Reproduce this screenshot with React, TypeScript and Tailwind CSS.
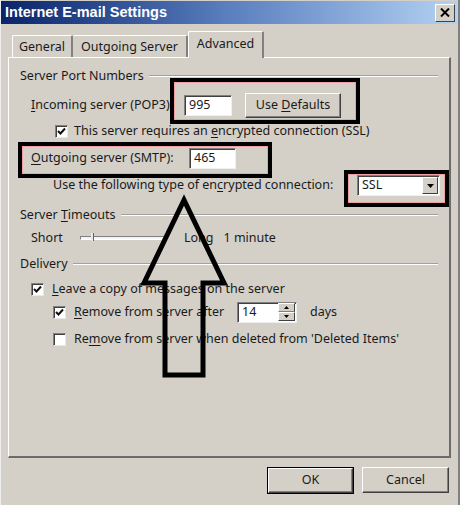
import React from "react";

const Check = ({ checked }: { checked: boolean }) => (
  <div className="w-[13px] h-[13px] bg-white border border-t-[#808080] border-l-[#808080] border-r-[#e8e8e8] border-b-[#e8e8e8] shadow-[inset_1px_1px_0_#404040] flex items-center justify-center shrink-0">
    {checked && (
      <svg width="9" height="9" viewBox="0 0 9 9">
        <path d="M1 4 L3.5 6.5 L8 1.5" stroke="#111" strokeWidth="2" fill="none" />
      </svg>
    )}
  </div>
);

const GroupHeader = ({ children, mt }: { children: React.ReactNode; mt: string }) => (
  <div className={`flex items-center h-[20px] pl-[11px] pr-[11px] ${mt}`}>
    <span className="whitespace-nowrap">{children}</span>
    <div className="flex-1 ml-[5px] h-[2px] border-t border-t-[#a0a0a0] border-b border-b-white" />
  </div>
);

const U = ({ children }: { children: React.ReactNode }) => <span className="underline underline-offset-2">{children}</span>;

const Input = ({ value, w }: { value: string; w: string }) => (
  <div className={`${w} h-[21px] bg-white border border-t-[#808080] border-l-[#808080] border-r-[#f0f0f0] border-b-[#f0f0f0] shadow-[inset_1px_1px_0_#404040] flex items-center pl-[4px] shrink-0`}>
    {value}
  </div>
);

export default function App() {
  return (
    <div
      className="w-[460px] h-[505px] bg-[#d4d0c8] relative overflow-hidden text-[12.5px] text-[#1a1a1a] border-l border-l-[#eeeeee] border-r-2 border-r-[#808080]"
      style={{ fontFamily: '"Noto Sans", "Open Sans", sans-serif' }}
    >
      {/* Title bar */}
      <div className="mt-[1px] h-[23px] flex items-center justify-between pl-[4px] pr-[3px] bg-gradient-to-r from-[#0a246a] via-[#5b7fbf] to-[#b4d2f2]">
        <span className="text-white font-bold text-[14.5px]" style={{ fontFamily: '"Liberation Sans", Arial, sans-serif' }}>
          Internet E-mail Settings
        </span>
        <div className="w-[20px] h-[18px] bg-[#d4d0c8] border border-t-white border-l-white border-r-[#404040] border-b-[#404040] flex items-center justify-center">
          <svg width="10" height="9" viewBox="0 0 10 9">
            <path d="M1 0.5 L9 8.5 M9 0.5 L1 8.5" stroke="#000" strokeWidth="2" />
          </svg>
        </div>
      </div>

      {/* Tabs */}
      <div className="mt-[8px] ml-[11px] h-[25px] flex items-end relative z-10">
        <div className="h-[22px] w-[61px] flex items-center justify-center pt-[2px] border-t border-l border-t-white border-l-white border-r-2 border-r-[#808080] rounded-t-[2px]">
          General
        </div>
        <div className="h-[22px] w-[115px] flex items-center justify-center pt-[2px] border-t border-t-white border-r-2 border-r-[#808080] rounded-t-[2px]">
          Outgoing Server
        </div>
        <div className="h-[27px] -mb-[1px] w-[76px] flex items-start pt-[3px] justify-center border-t border-l border-t-white border-l-white border-r-2 border-r-[#808080] bg-[#d4d0c8] rounded-t-[2px]">
          Advanced
        </div>
      </div>

      {/* Panel */}
      <div className="ml-[7px] w-[443px] h-[401px] border-t border-l border-t-white border-l-white border-r-2 border-b-2 border-r-[#6b6b6b] border-b-[#6b6b6b] flex flex-col">
        <GroupHeader mt="mt-[8px]">Server Port Numbers</GroupHeader>

        <div className="mt-[6px] h-[26px] flex items-center pl-[22px]">
          <span className="w-[153px] whitespace-nowrap"><U>I</U>ncoming server (POP3):</span>
          <Input value="995" w="w-[48px]" />
          <div className="ml-[13px] w-[96px] h-[25px] border border-t-white border-l-white border-r-[#404040] border-b-[#404040] shadow-[inset_-1px_-1px_0_#808080] flex items-center justify-center">
            <span>Use <U>D</U>efaults</span>
          </div>
        </div>

        <div className="mt-[4px] h-[18px] flex items-center pl-[46px]">
          <Check checked />
          <span className="ml-[6px] whitespace-nowrap">This server requires an <U>e</U>ncrypted connection (SSL)</span>
        </div>

        <div className="mt-[8px] h-[21px] flex items-center pl-[22px]">
          <span className="w-[158px] whitespace-nowrap"><U>O</U>utgoing server (SMTP):</span>
          <Input value="465" w="w-[47px]" />
        </div>

        <div className="mt-[6px] h-[21px] flex items-center pl-[44px]">
          <span className="w-[304px] whitespace-nowrap overflow-hidden">Use the following type of en<U>c</U>rypted connection:</span>
          <div className="w-[83px] h-[21px] bg-white border border-t-[#808080] border-l-[#808080] border-r-[#f0f0f0] border-b-[#f0f0f0] shadow-[inset_1px_1px_0_#404040] flex items-center justify-between pl-[4px] pr-[1px]">
            <span>SSL</span>
            <div className="w-[16px] h-[17px] bg-[#d4d0c8] border border-t-white border-l-white border-r-[#404040] border-b-[#404040] flex items-center justify-center">
              <svg width="7" height="4" viewBox="0 0 7 4"><path d="M0 0 H7 L3.5 4 Z" fill="#000" /></svg>
            </div>
          </div>
        </div>

        <GroupHeader mt="mt-[9px]">Server <U>T</U>imeouts</GroupHeader>

        <div className="mt-[3px] h-[20px] flex items-center pl-[22px]">
          <span className="w-[49px]">Short</span>
          <div className="relative w-[88px] h-[4px] border-t border-l border-t-[#808080] border-l-[#808080] border-b border-b-white bg-[#f4f4f4]">
            <div className="absolute left-[10px] -top-[4px] w-[3px] h-[8px] bg-[#e8e8e8] border-r border-r-[#606060]" />
          </div>
          <span className="ml-[16px]">Long</span>
          <span className="ml-[10px]">1 minute</span>
        </div>

        <GroupHeader mt="mt-[6px]">Delivery</GroupHeader>

        <div className="mt-[6px] h-[18px] flex items-center pl-[22px]">
          <Check checked />
          <span className="ml-[8px] whitespace-nowrap"><U>L</U>eave a copy of messages on the server</span>
        </div>

        <div className="mt-[3px] h-[22px] flex items-center pl-[44px]">
          <Check checked />
          <span className="ml-[8px] w-[163px] whitespace-nowrap"><U>R</U>emove from server after</span>
          <div className="w-[60px] h-[21px] bg-white border border-t-[#808080] border-l-[#808080] border-r-[#f0f0f0] border-b-[#f0f0f0] shadow-[inset_1px_1px_0_#404040] flex items-center justify-between pl-[4px] pr-[1px]">
            <span>14</span>
            <div className="flex flex-col w-[17px] h-[18px]">
              <div className="h-[9px] bg-[#d4d0c8] border border-t-white border-l-white border-r-[#404040] border-b-[#808080] flex items-center justify-center">
                <svg width="5" height="3" viewBox="0 0 5 3"><path d="M0 3 H5 L2.5 0 Z" fill="#000" /></svg>
              </div>
              <div className="h-[9px] bg-[#d4d0c8] border border-t-white border-l-white border-r-[#404040] border-b-[#404040] flex items-center justify-center">
                <svg width="5" height="3" viewBox="0 0 5 3"><path d="M0 0 H5 L2.5 3 Z" fill="#000" /></svg>
              </div>
            </div>
          </div>
          <span className="ml-[13px]">days</span>
        </div>

        <div className="mt-[7px] h-[18px] flex items-center pl-[44px]">
          <Check checked={false} />
          <span className="ml-[8px] whitespace-nowrap">Re<U>m</U>ove from server when deleted from 'Deleted Items'</span>
        </div>
      </div>

      {/* Buttons */}
      <div className="mt-[9px] flex justify-end pr-[9px] gap-[8px]">
        <div className="w-[87px] h-[27px] border border-black flex">
          <div className="flex-1 border border-t-white border-l-white border-r-[#404040] border-b-[#404040] shadow-[inset_-1px_-1px_0_#808080] flex items-center justify-center">
            OK
          </div>
        </div>
        <div className="w-[87px] h-[26px] border border-t-white border-l-white border-r-[#404040] border-b-[#404040] shadow-[inset_-1px_-1px_0_#808080] flex items-center justify-center">
          Cancel
        </div>
      </div>

      {/* Annotation overlays */}
      <div className="absolute left-[169px] top-[78px] w-[190px] h-[46px] border-[4px] border-black">
        <div className="w-full h-full border border-[#f0a0a0]" />
      </div>
      <div className="absolute left-[17px] top-[142px] w-[254px] h-[36px] border-[4px] border-black">
        <div className="w-full h-full border border-[#f0a0a0]" />
      </div>
      <div className="absolute left-[343px] top-[170px] w-[105px] h-[37px] border-[4px] border-black">
        <div className="w-full h-full border border-[#f0a0a0]" />
      </div>
      <svg className="absolute left-0 top-0 pointer-events-none" width="460" height="505" viewBox="0 0 460 505">
        <path
          d="M183 200 L143 283 L164 283 L164 375 L202 375 L202 283 L223 283 Z"
          fill="none"
          stroke="#000"
          strokeWidth="5"
          strokeLinejoin="miter"
        />
      </svg>
    </div>
  );
}
